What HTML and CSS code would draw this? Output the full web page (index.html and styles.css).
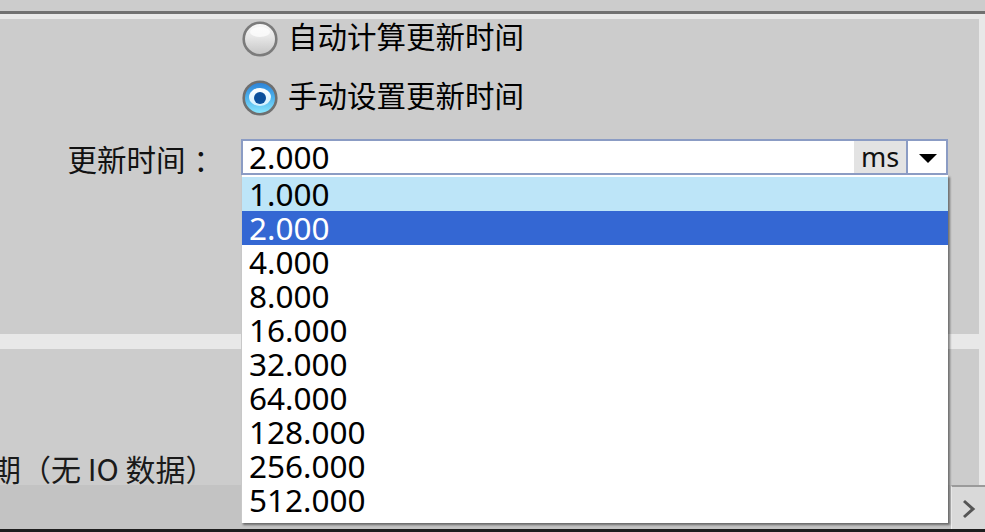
FILE: index.html
```html
<!DOCTYPE html>
<html lang="zh-CN">
<head>
<meta charset="utf-8">
<title>更新时间</title>
<link rel="stylesheet" href="styles.css">
</head>
<body>
<div class="topbar"></div>
<div class="rule"></div>
<div class="frame">
  <section class="panel panel-top">
    <div class="form">
      <div class="spacer"></div>
      <label class="radio">
        <svg class="radio-icon" width="36" height="36" viewBox="0 0 36 36">
          <defs>
            <linearGradient id="gOff" x1="0" y1="0" x2="0" y2="1">
              <stop offset="0" stop-color="#fbfbfb"/>
              <stop offset="0.45" stop-color="#e6e6e6"/>
              <stop offset="1" stop-color="#c4c4c4"/>
            </linearGradient>
          </defs>
          <circle cx="18" cy="18" r="16.3" fill="url(#gOff)" stroke="#7b7b7b" stroke-width="2.6"/>
          <ellipse cx="18" cy="11" rx="10" ry="5" fill="#ffffff" opacity="0.7"/>
        </svg>
        <span class="radio-text">自动计算更新时间</span>
      </label>
      <div class="spacer"></div>
      <label class="radio">
        <svg class="radio-icon" width="36" height="36" viewBox="0 0 36 36">
          <defs>
            <linearGradient id="gOn" x1="0" y1="0" x2="0" y2="1">
              <stop offset="0" stop-color="#2a7fd6"/>
              <stop offset="0.5" stop-color="#4fb4ee"/>
              <stop offset="1" stop-color="#8eeaff"/>
            </linearGradient>
            <linearGradient id="gRing" x1="0" y1="0" x2="0" y2="1">
              <stop offset="0" stop-color="#ffffff"/>
              <stop offset="1" stop-color="#cfefff"/>
            </linearGradient>
          </defs>
          <circle cx="18" cy="18" r="16.3" fill="url(#gOn)" stroke="#6f6f6f" stroke-width="2.6"/>
          <ellipse cx="18" cy="17" rx="11" ry="9" fill="url(#gRing)"/>
          <circle cx="18" cy="18" r="6" fill="#0c4f9b"/>
        </svg>
        <span class="radio-text">手动设置更新时间</span>
      </label>
      <div class="label">更新时间<span class="colon">：</span></div>
      <div class="combo">
        <div class="field">
          <span class="value">2.000</span>
          <span class="unit">ms</span>
          <span class="arrow">
            <svg width="18" height="9" viewBox="0 0 18 9"><polygon points="0,0 18,0 9,9" fill="#000"/></svg>
          </span>
        </div>
        <ul class="list">
          <li class="item hover">1.000</li>
          <li class="item selected">2.000</li>
          <li class="item">4.000</li>
          <li class="item">8.000</li>
          <li class="item">16.000</li>
          <li class="item">32.000</li>
          <li class="item">64.000</li>
          <li class="item">128.000</li>
          <li class="item">256.000</li>
          <li class="item">512.000</li>
        </ul>
      </div>
    </div>
  </section>
  <section class="panel panel-bottom">
    <div class="note">期（无 IO 数据）</div>
  </section>
</div>
<div class="hscroll">
  <div class="scroll-btn">
    <svg width="14" height="20" viewBox="0 0 14 20"><polyline points="2,2 11,10 2,18" fill="none" stroke="#555" stroke-width="3"/></svg>
  </div>
</div>
<div class="bottombar"></div>
</body>
</html>
```

FILE: styles.css
```css
* { box-sizing: border-box; }
html, body {
  margin: 0;
  padding: 0;
  width: 985px;
  height: 532px;
  overflow: hidden;
  background: #cccccc;
  font-family: "Noto Sans CJK SC", "Noto Sans", sans-serif;
}
.topbar { height: 11px; background: #cccccc; }
.rule { height: 3px; background: #707070; }
.frame {
  background: #e8e8e8;
  padding: 5px 6px 0 0;
  display: flex;
  flex-direction: column;
  gap: 15px;
}
.panel { background: #cccccc; }
.panel-top {
  height: 315px;
  padding: 2px 31px 0 0;
}
.form {
  display: grid;
  grid-template-columns: 241px 1fr;
  grid-auto-rows: 36px;
  row-gap: 23px;
}
.radio {
  display: flex;
  align-items: center;
  gap: 10px;
  margin-left: 1px;
  font-size: 29.5px;
  color: #000;
  line-height: 36px;
}
.radio-text {
  line-height: 30px;
  padding-bottom: 8px;
}
.radio-icon { display: block; flex: none; }
.label {
  justify-self: end;
  padding-right: 18px;
  font-size: 29.5px;
  line-height: 36px;
  margin-top: 1px;
  color: #111;
}
.colon { margin-left: 8px; }
.combo { position: relative; }
.field {
  display: flex;
  height: 36px;
  border: 2px solid #8b9cc4;
  background: #fff;
  font-family: "Noto Sans", sans-serif;
}
.value {
  flex: 1;
  padding-left: 6px;
  font-size: 31.5px;
  line-height: 32px;
  color: #000;
}
.unit {
  width: 52px;
  background: #e3e3e3;
  text-align: center;
  font-size: 27px;
  line-height: 32px;
  color: #111;
}
.arrow {
  width: 40px;
  border-left: 2px solid #8b9cc4;
  display: flex;
  align-items: center;
  justify-content: center;
}
.arrow svg { display: block; margin-top: 2px; margin-left: 1px; }
.list {
  position: absolute;
  left: 0;
  right: 0;
  top: 36px;
  margin: 0;
  padding: 2px 0 6px 0;
  list-style: none;
  background: #fff;
  border-left: 1px solid #c8c8c8;
  box-shadow: 2px 2px 2px rgba(0, 0, 0, 0.45);
  z-index: 5;
  font-family: "Noto Sans", sans-serif;
}
.item {
  height: 34px;
  line-height: 33px;
  padding-left: 7px;
  font-size: 31.5px;
  color: #000;
}
.item.hover { background: #bde5f8; }
.item.selected { background: #3467d3; color: #fff; }
.panel-bottom {
  height: 136px;
  overflow: hidden;
  display: flex;
  flex-direction: column;
  justify-content: flex-end;
}
.note {
  margin-left: -9px;
  font-size: 30px;
  line-height: 33px;
  color: #1a1a1a;
  white-space: nowrap;
}
.hscroll {
  height: 44px;
  background: #c3c3c3;
  display: flex;
  justify-content: flex-end;
}
.scroll-btn {
  width: 34px;
  background: #d9d9d9;
  border-top: 2px solid #9a9a9a;
  border-left: 1px solid #efefef;
  display: flex;
  align-items: center;
  justify-content: center;
}
.scroll-btn svg { display: block; margin-top: 2px; }
.bottombar { height: 3px; background: #1e1e1e; }
```
